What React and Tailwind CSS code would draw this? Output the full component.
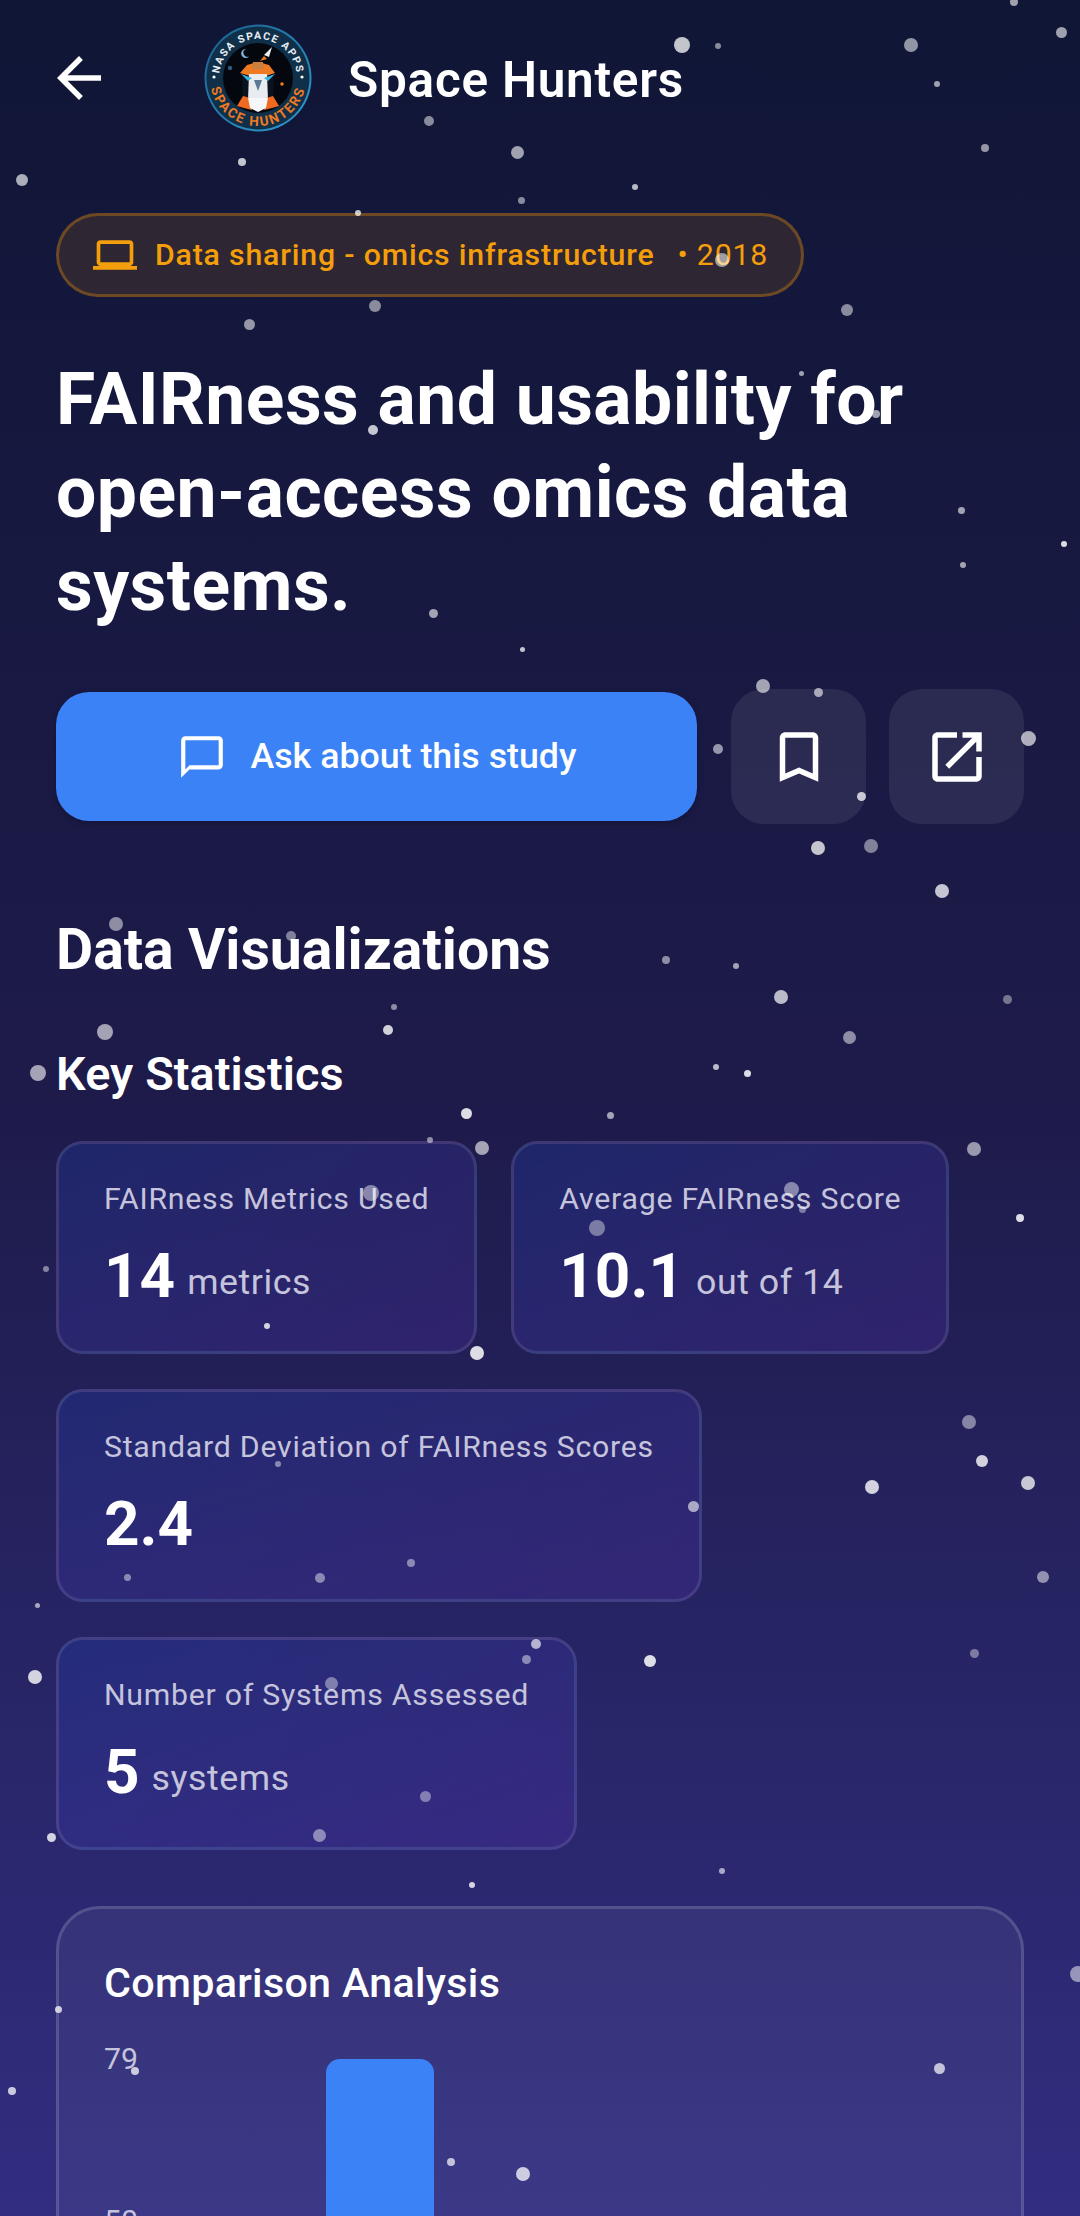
const stars = [
  [682, 45, 8, 0.75], [718, 46, 3, 0.5], [911, 45, 7, 0.55], [1061, 32, 5.5, 0.6], [1014, 2, 4, 0.6],
  [937, 84, 3, 0.6], [429, 121, 5, 0.5], [517, 152, 6.5, 0.6], [985, 148, 4, 0.55], [242, 162, 4, 0.75],
  [22, 180, 6, 0.65], [635, 187, 3, 0.7], [521, 200, 3.5, 0.5], [358, 213, 3, 0.75], [722, 260, 7, 0.55],
  [375, 306, 6, 0.5], [847, 310, 6, 0.5], [249, 324, 5.5, 0.55], [801, 373, 2.5, 0.6], [876, 414, 4, 0.6],
  [373, 430, 5, 0.75], [961, 510, 3.5, 0.6], [1064, 544, 3, 0.85], [963, 565, 3, 0.6], [433, 613, 4.5, 0.6],
  [522, 649, 2.5, 0.75], [763, 686, 7, 0.6], [818, 692, 4.5, 0.6], [718, 749, 5, 0.55], [1028, 738, 7.5, 0.65],
  [861, 796, 4.5, 0.75], [818, 848, 7, 0.75], [871, 846, 7, 0.45], [942, 891, 7, 0.75], [116, 924, 7, 0.5],
  [291, 936, 5, 0.45], [666, 960, 4, 0.5], [736, 966, 3, 0.6], [781, 997, 7, 0.7], [1007, 999, 4.5, 0.4],
  [394, 1007, 3, 0.5], [388, 1030, 5, 0.8], [105, 1032, 8, 0.6], [849, 1037, 6.5, 0.5], [38, 1073, 8, 0.6],
  [716, 1067, 3, 0.7], [747, 1073, 3.5, 0.85], [466, 1113, 5.5, 0.85], [610, 1115, 3.5, 0.6], [430, 1140, 3, 0.5],
  [482, 1148, 7, 0.6], [974, 1149, 7, 0.55], [371, 1193, 8, 0.45], [791, 1189, 7.5, 0.45], [597, 1228, 8, 0.4],
  [802, 1209, 3.5, 0.4], [1020, 1218, 4, 0.85], [46, 1269, 3, 0.45], [267, 1326, 3, 0.8], [477, 1353, 7, 0.85],
  [969, 1422, 7, 0.45], [982, 1461, 6, 0.8], [872, 1487, 7, 0.8], [1028, 1483, 7, 0.75], [278, 1464, 3, 0.45],
  [693, 1506, 5.5, 0.6], [411, 1563, 4, 0.45], [127, 1577, 3.5, 0.45], [320, 1578, 5, 0.45], [1043, 1577, 6, 0.5],
  [37, 1605, 2.5, 0.6], [536, 1644, 5, 0.65], [526, 1659, 4.5, 0.45], [650, 1661, 6, 0.85], [974, 1653, 4.5, 0.4],
  [35, 1677, 7, 0.8], [331, 1683, 6.5, 0.4], [425, 1796, 5.5, 0.4], [51, 1837, 4.5, 0.8], [319, 1835, 6.5, 0.45],
  [722, 1871, 3, 0.6], [472, 1885, 3, 0.8], [58, 2009, 3.5, 0.75], [1078, 1974, 8, 0.5], [12, 2091, 4, 0.75],
  [135, 2071, 4, 0.75], [939, 2068, 5.5, 0.7], [451, 2162, 4, 0.7], [523, 2174, 7, 0.75],
]

const StarField = () => (
  <div className="pointer-events-none absolute inset-0">
    {stars.map(([x, y, r, o]) => (
      <span
        key={`${x}-${y}`}
        className="absolute rounded-full bg-white"
        style={{ left: x - r, top: y - r, width: r * 2, height: r * 2, opacity: o }}
      />
    ))}
  </div>
)

const MaterialIcon = ({ d, className }) => (
  <svg viewBox="0 0 24 24" fill="currentColor" className={className}>
    <path d={d} />
  </svg>
)

const Logo = () => (
  <svg viewBox="0 0 108 108" className="h-[108px] w-[108px] shrink-0">
    <defs>
      <path id="arcTop" d="M 15 54 A 39 39 0 0 1 93 54" />
      <path id="arcBottom" d="M 6 54 A 48 48 0 0 0 102 54" />
      <linearGradient id="rim" x1="0" y1="0" x2="1" y2="1">
        <stop offset="0" stopColor="#1a5f8c" />
        <stop offset="1" stopColor="#2f9bd0" />
      </linearGradient>
    </defs>
    <circle cx="54" cy="54" r="53.5" fill="url(#rim)" />
    <circle cx="54" cy="54" r="51.5" fill="#10304a" />
    <circle cx="54" cy="54" r="35" fill="#05070f" />
    <text fontFamily="Roboto, sans-serif" fontSize="10.5" fontWeight="700" fill="#e8edf2" letterSpacing="1.4">
      <textPath href="#arcTop" startOffset="50%" textAnchor="middle">NASA SPACE APPS</textPath>
    </text>
    <text fontFamily="Roboto, sans-serif" fontSize="13.5" fontWeight="700" fill="#ee7a22" letterSpacing="1.9">
      <textPath href="#arcBottom" startOffset="50%" textAnchor="middle">SPACE HUNTERS</textPath>
    </text>
    <circle cx="10" cy="53" r="1.6" fill="#fff" />
    <circle cx="98" cy="53" r="1.6" fill="#fff" />
    {/* moon and rocket */}
    <path d="M42 25a4.5 4.5 0 1 0 3 7.5 4 4 0 0 1-3-7.5z" fill="#7fb6d6" />
    <polygon points="68,23 65,33 60,31" fill="#e8edf2" />
    <polygon points="60,32 56,37 63,35" fill="#ee7a22" />
    <circle cx="26" cy="44" r="2.2" fill="#2d5d80" />
    <circle cx="78" cy="60" r="1.8" fill="#ee7a22" />
    {/* falcon */}
    <polygon points="54,38 65,41 71,49 62,52 46,52 36,49 43,41" fill="#ef7a24" />
    <polygon points="49,38 59,38 60,45 48,45" fill="#c9803f" />
    <polygon points="38,54 46,52 46,74 39,74" fill="#0a1220" />
    <polygon points="70,54 62,52 62,74 69,74" fill="#0a1220" />
    <polygon points="45,50 63,50 64,76 44,76" fill="#e8ecf0" />
    <polygon points="37,50 48,54 44,57" fill="#39b4dc" />
    <polygon points="71,50 60,54 64,57" fill="#39b4dc" />
    <polygon points="50,56 58,56 54,67" fill="#5a7a94" />
    <polygon points="39,72 46,74 48,86 40,84 33,82" fill="#ef6a20" />
    <polygon points="69,72 62,74 60,86 68,84 75,82" fill="#ef6a20" />
    <polygon points="44,74 64,74 62,84 54,88 46,84" fill="#f6f7f8" />
  </svg>
)

const StatCard = ({ label, value, unit }) => (
  <div className="h-[213px] rounded-[27px] border-[3px] border-white/10 bg-gradient-to-br from-[#1e40af]/30 to-[#7c3aed]/15 px-[45px] pb-[40px] pt-[34px]">
    <p className="text-[30.25px] leading-[42px] tracking-[0.75px] text-[#c5c4dc]">{label}</p>
    <div className="mt-[20px] flex items-baseline gap-[12px]">
      <span className="text-[62px] font-bold leading-[72px] text-white">{value}</span>
      {unit && <span className="-translate-y-[3px] text-[35.75px] leading-none tracking-[0.55px] text-[#c5c4dc]">{unit}</span>}
    </div>
  </div>
)

const App = () => {
  return (
    <div className="relative h-[2216px] overflow-hidden bg-gradient-to-b from-[#101636] via-[#1e1b4b] to-[#312e81] font-['Roboto',sans-serif] text-white">
      <header className="flex h-[156px] items-center">
        <MaterialIcon className="ml-[46px] h-[66px] w-[66px]" d="M20 11H7.83l5.59-5.59L12 4l-8 8 8 8 1.41-1.41L7.83 13H20v-2z" />
        <div className="ml-[92px]"><Logo /></div>
        <h2 className="ml-[36px] mt-[4px] text-[49.5px] font-semibold tracking-[0.75px]">Space Hunters</h2>
      </header>

      <main className="px-[56px] pt-[57px]">
        <div className="inline-flex h-[84px] items-center rounded-full border-[3px] border-amber-500/30 bg-amber-500/[0.12] pl-[34px] pr-[33px] text-[#f59e0b]">
          <MaterialIcon className="h-[44px] w-[44px]" d="M20 18c1.1 0 1.99-.9 1.99-2L22 6c0-1.1-.9-2-2-2H4c-1.1 0-2 .9-2 2v10c0 1.1.9 2 2 2H0v2h24v-2h-4zM4 6h16v10H4V6z" />
          <span className="ml-[18px] text-[30.25px] font-medium tracking-[0.825px]">Data sharing - omics infrastructure</span>
          <span className="ml-[23px] text-[30.25px] tracking-[0.825px]">• 2018</span>
        </div>

        <h1 className="mt-[56px] text-[71.5px] font-bold leading-[93px] tracking-[0.45px]">
          FAIRness and usability for open-access omics data systems.
        </h1>

        <div className="mt-[57px] flex items-center gap-[23px]">
          <button className="mr-[11px] flex h-[129px] w-[641px] items-center justify-center gap-[24px] rounded-[33px] bg-[#3b82f6] shadow-[0_2px_6px_rgba(0,0,0,0.25)]">
            <MaterialIcon className="h-[50px] w-[50px]" d="M20 2H4c-1.1 0-2 .9-2 2v18l4-4h14c1.1 0 2-.9 2-2V4c0-1.1-.9-2-2-2zm0 14H6l-2 2V4h16v12z" />
            <span className="text-[35.75px] font-medium">Ask about this study</span>
          </button>
          <button className="flex h-[135px] w-[135px] items-center justify-center rounded-[33px] bg-white/[0.08]">
            <MaterialIcon className="h-[66px] w-[66px]" d="M17 3H7c-1.1 0-1.99.9-1.99 2L5 21l7-3 7 3V5c0-1.1-.9-2-2-2zm0 15l-5-2.18L7 18V5h10v13z" />
          </button>
          <button className="flex h-[135px] w-[135px] items-center justify-center rounded-[33px] bg-white/[0.08]">
            <MaterialIcon className="h-[66px] w-[66px]" d="M19 19H5V5h7V3H5c-1.11 0-2 .9-2 2v14c0 1.1.89 2 2 2h14c1.1 0 2-.9 2-2v-7h-2v7zM14 3v2h3.59l-9.83 9.83 1.41 1.41L19 6.41V10h2V3h-7z" />
          </button>
        </div>

        <h2 className="mt-[96px] text-[57.2px] font-bold leading-[60px]">Data Visualizations</h2>
        <h3 className="mt-[68px] text-[46.75px] font-semibold leading-[52px] tracking-[0.1px]">Key Statistics</h3>

        <div className="mt-[41px] flex flex-wrap gap-x-[34px] gap-y-[35px]">
          <StatCard label="FAIRness Metrics Used" value="14" unit="metrics" />
          <StatCard label="Average FAIRness Score" value="10.1" unit="out of 14" />
          <StatCard label="Standard Deviation of FAIRness Scores" value="2.4" />
          <StatCard label="Number of Systems Assessed" value="5" unit="systems" />
        </div>

        <section className="mt-[56px] h-[500px] rounded-[44px] border-[3px] border-white/15 bg-white/5 px-[45px] pt-[49px]">
          <h3 className="text-[41.25px] font-medium leading-[50px] tracking-[0.3px]">Comparison Analysis</h3>
          <div className="mt-[30px] flex">
            <div className="flex w-[222px] shrink-0 flex-col gap-[120px] text-[30.25px] leading-[42px] text-[#c5c4dc]">
              <span>79</span>
              <span>50</span>
            </div>
            <div className="mt-[21px] h-[300px] w-[108px] rounded-t-[14px] bg-[#3b82f6]" />
          </div>
        </section>
      </main>

      <StarField />
    </div>
  )
}

export default App
